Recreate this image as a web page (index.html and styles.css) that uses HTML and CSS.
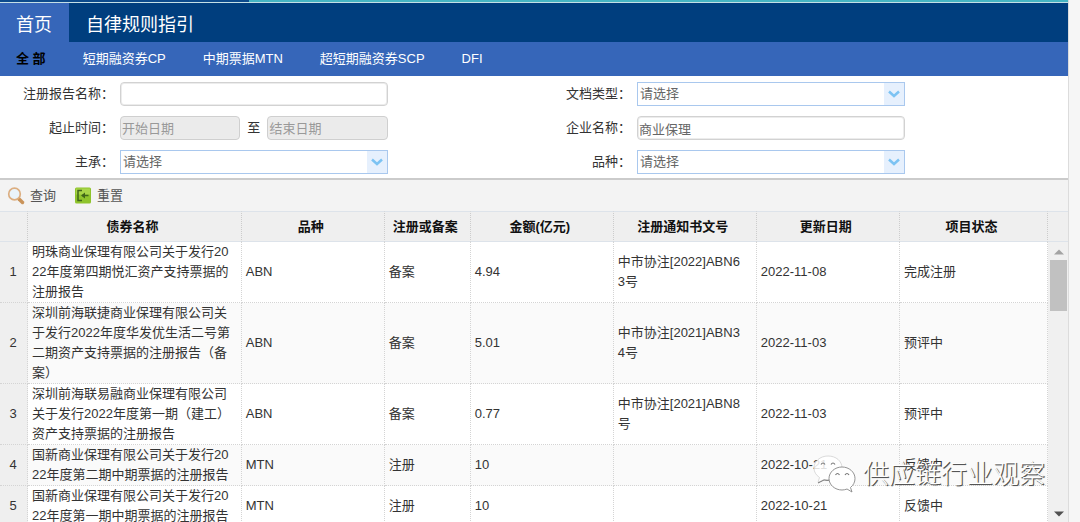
FILE: index.html
```html
<!DOCTYPE html>
<html lang="zh-CN">
<head>
    <meta charset="UTF-8"/>
    <title>自律规则指引</title>
    <meta name="viewport" content="width=device-width, initial-scale=1"/>
    <link rel="stylesheet" href="styles.css">
</head>
<body>
<div class="page">
    <div class="strip"></div>

    <nav class="main-nav">
        <a href="#" class="active">首页</a>
        <a href="#">自律规则指引</a>
    </nav>
    <nav class="sub-nav">
        <a href="#" class="active">全 部</a>
        <a href="#">短期融资券CP</a>
        <a href="#">中期票据MTN</a>
        <a href="#">超短期融资券SCP</a>
        <a href="#">DFI</a>
    </nav>

    <form class="search">
        <div class="search-col">
            <div class="row">
                <label for="name">注册报告名称：</label>
                <div class="field"><input type="text" id="name"/></div>
            </div>
            <div class="row">
                <label for="start">起止时间：</label>
                <div class="field dates">
                    <input type="text" id="start" placeholder="开始日期" disabled/>
                    <label for="end">至</label>
                    <input type="text" id="end" placeholder="结束日期" disabled/>
                </div>
            </div>
            <div class="row">
                <label for="lead">主承：</label>
                <div class="field combo">
                    <select id="lead"><option>请选择</option></select>
                    <svg viewBox="0 0 20 22"><path d="M5 8.500l5 4.500l5-4.500"/></svg>
                </div>
            </div>
        </div>
        <div class="search-col">
            <div class="row">
                <label for="doctype">文档类型：</label>
                <div class="field combo">
                    <select id="doctype"><option>请选择</option></select>
                    <svg viewBox="0 0 20 22"><path d="M5 8.500l5 4.500l5-4.500"/></svg>
                </div>
            </div>
            <div class="row">
                <label for="company">企业名称：</label>
                <div class="field"><input type="text" id="company" value="商业保理"/></div>
            </div>
            <div class="row">
                <label for="kind">品种：</label>
                <div class="field combo">
                    <select id="kind"><option>请选择</option></select>
                    <svg viewBox="0 0 20 22"><path d="M5 8.500l5 4.500l5-4.500"/></svg>
                </div>
            </div>
        </div>
    </form>

    <div class="toolbar">
        <button type="button">
            <svg viewBox="0 0 18 18">
                <path d="M12 12l3.500 3.500" stroke="#c9935a" stroke-width="3.500" stroke-linecap="round"/>
                <circle cx="7.500" cy="7" r="5.800" fill="#eaf4fb" stroke="#dcae80" stroke-width="1.700"/>
            </svg>
            查询
        </button>
        <button type="button">
            <svg viewBox="0 0 18 18">
                <rect x="1" y="0.500" width="16" height="16" rx="1.500" fill="#8fc42c"/>
                <rect x="2" y="1.500" width="14" height="6" fill="#a8d548"/>
                <path d="M8 3.500H4v10h4M14.500 8.500H8" fill="none" stroke="#40661a" stroke-width="1.500"/>
                <path d="M7 8.500l4-3v6z" fill="#40661a"/>
            </svg>
            重置
        </button>
    </div>

    <div class="grid">
        <table>
            <colgroup>
                <col class="c-num"><col class="c-name"><col class="c-mid"><col class="c-reg">
                <col class="c-mid"><col class="c-mid"><col class="c-mid"><col>
            </colgroup>
            <thead>
            <tr>
                <th></th>
                <th>债券名称</th>
                <th>品种</th>
                <th>注册或备案</th>
                <th>金额(亿元)</th>
                <th>注册通知书文号</th>
                <th>更新日期</th>
                <th>项目状态</th>
            </tr>
            </thead>
            <tbody>
            <tr>
                <td>1</td>
                <td>明珠商业保理有限公司关于发行2022年度第四期悦汇资产支持票据的注册报告</td>
                <td>ABN</td>
                <td>备案</td>
                <td>4.94</td>
                <td>中市协注[2022]ABN63号</td>
                <td>2022-11-08</td>
                <td>完成注册</td>
            </tr>
            <tr>
                <td>2</td>
                <td>深圳前海联捷商业保理有限公司关于发行2022年度华发优生活二号第二期资产支持票据的注册报告（备案）</td>
                <td>ABN</td>
                <td>备案</td>
                <td>5.01</td>
                <td>中市协注[2021]ABN34号</td>
                <td>2022-11-03</td>
                <td>预评中</td>
            </tr>
            <tr>
                <td>3</td>
                <td>深圳前海联易融商业保理有限公司关于发行2022年度第一期（建工）资产支持票据的注册报告</td>
                <td>ABN</td>
                <td>备案</td>
                <td>0.77</td>
                <td>中市协注[2021]ABN8号</td>
                <td>2022-11-03</td>
                <td>预评中</td>
            </tr>
            <tr>
                <td>4</td>
                <td>国新商业保理有限公司关于发行2022年度第二期中期票据的注册报告</td>
                <td>MTN</td>
                <td>注册</td>
                <td>10</td>
                <td></td>
                <td>2022-10-21</td>
                <td>反馈中</td>
            </tr>
            <tr>
                <td>5</td>
                <td>国新商业保理有限公司关于发行2022年度第一期中期票据的注册报告</td>
                <td>MTN</td>
                <td>注册</td>
                <td>10</td>
                <td></td>
                <td>2022-10-21</td>
                <td>反馈中</td>
            </tr>
            </tbody>
        </table>
        <div class="side">
            <div class="side-head"></div>
            <div class="scrollbar">
                <svg viewBox="0 0 10 6"><path d="M0 5.500l5-5l5 5z" fill="#a3a3a3"/></svg>
                <div class="thumb"></div>
                <svg viewBox="0 0 10 6"><path d="M0 .5l5 5l5-5z" fill="#505050"/></svg>
            </div>
        </div>
    </div>
</div>

<div class="watermark">
    <svg viewBox="0 0 44 38">
        <path d="M15 1C7 1 1 6.500 1 13c0 4 2 7 5.500 9.500L5 27.500l6-3c9 2 18-3 18-11.500C29 6 23 1 15 1z" fill="#fff" fill-opacity="0.85" stroke="#ccc" stroke-width="0.700"/>
        <path d="M5 28l6-3q3 .7 6 .2" fill="none" stroke="#777"/>
        <path d="M29 12c-7 0-13 5-13 11.500S22 35 29 35c2 0 3.500-.4 5-1l5 3-1.500-4.500C40.500 30 42 27 42 23.500 42 17 36 12 29 12z" fill="#fff" stroke="#888" stroke-width="0.900"/>
        <path d="M8 9.500q2-3 4 0M18 9.500q2-3 4 0M22.500 20q2-3 4 0M32 20q2-3 4 0" fill="none" stroke="#777" stroke-width="1.200"/>
    </svg>
    <span>供应链行业观察</span>
</div>
</body>
</html>
```
FILE: styles.css
```css
* {
    box-sizing: border-box;
}

body {
    margin: 0;
    background: #f6f6f6;
    color: #333;
    font-family: "Liberation Sans", "Noto Sans CJK SC", sans-serif;
    font-size: 13px;
    line-height: 20px;
}

a {
    color: #fff;
    text-decoration: none;
}

.page {
    display: flex;
    flex-direction: column;
    height: 100vh;
    margin-right: 11px;
    overflow: hidden;
    background: #fff;
    border-right: 1px solid #dcdcdc;
}

.strip {
    flex: none;
    height: 3px;
    background: linear-gradient(to right, #0c4a8c 23.3%, #46b5c3 23.3%);
    border-bottom: 1px solid #c4dfe6;
}

/* Navigation */
.main-nav {
    display: flex;
    flex: none;
    height: 39px;
    background: #003e7e;
    font-size: 18px;
}

.main-nav a {
    display: flex;
    align-items: center;
    padding: 4px 17px 0;
}

.main-nav .active {
    background: #3666b9;
    padding-left: 16px;
}

.sub-nav {
    display: flex;
    flex: none;
    align-items: center;
    gap: 37px;
    height: 34px;
    padding-left: 16px;
    background: #3666b9;
}

.sub-nav .active {
    color: #000;
    font-weight: 700;
}

/* Search form */
.search {
    display: flex;
    flex: none;
    padding: 6px 0 4px;
    border-bottom: 2px solid #cbcbcb;
}

.search-col {
    display: flex;
    flex-direction: column;
    gap: 10px;
    width: 48.4%;
}

.row {
    display: flex;
    align-items: center;
    gap: 5px;
    height: 24px;
}

.row > label {
    flex: none;
    width: 115px;
    padding-right: 1px;
    text-align: right;
}

.field {
    width: 51.8%;
}

input,
select {
    width: 100%;
    min-width: 0;
    height: 24px;
    padding: 0 1px;
    color: #666;
    background: #fff;
    border: 1px solid #d2d2d2;
    border-radius: 4px;
    box-shadow: inset 0 0 0 1px #ececec;
    font: inherit;
}

input:disabled {
    background: #ebebeb;
    border-color: #cfcfcf;
}

input::placeholder {
    color: #999;
}

.dates {
    display: flex;
    align-items: center;
    gap: 7px;
}

.combo {
    display: grid;
    grid-template-columns: 1fr 21px;
}

.combo select {
    grid-area: 1 / 1 / 2 / 3;
    appearance: none;
    padding: 0 2px;
    border-color: #a9c8ee;
    border-radius: 0;
    box-shadow: none;
}

.combo svg {
    grid-area: 1 / 2;
    width: 20px;
    height: 22px;
    margin-top: 1px;
    background: #e6f0fd;
    fill: none;
    stroke: #7cc3f3;
    stroke-width: 2.5;
    pointer-events: none;
}

/* Toolbar */
.toolbar {
    display: flex;
    flex: none;
    align-items: center;
    gap: 18px;
    height: 31px;
    padding-left: 7px;
    background: #f3f3f3;
}

.toolbar button {
    display: flex;
    align-items: center;
    gap: 5px;
    padding: 0;
    color: #555;
    background: none;
    border: 0;
    font: inherit;
    cursor: pointer;
}

.toolbar svg {
    width: 18px;
    height: 18px;
}

/* Data grid */
.grid {
    display: flex;
    flex: 1;
    min-height: 0;
}

table {
    flex: 1;
    align-self: flex-start;
    table-layout: fixed;
    width: 100%;
    border-collapse: separate;
    border-spacing: 0;
}

.c-num {
    width: 28px;
}

.c-name {
    width: 20.4%;
}

.c-mid {
    width: 13.65%;
}

.c-reg {
    width: 8.2%;
}

th,
.side-head {
    height: 31px;
    padding: 0 4px 0 0;
    background: #efefef;
    border-top: 1px solid #dde3ea;
    border-bottom: 1px solid #dde3ea;
}

th {
    color: #111;
    border-right: 1px dotted #ccc;
}

td {
    padding: 0 10px 0 4px;
    border-right: 1px dotted #d4d4d4;
    border-bottom: 1px dotted #d4d4d4;
    word-break: break-all;
}

td:first-child {
    padding: 0 1px 0 0;
    background: #efefef;
    text-align: center;
}

tbody tr:nth-child(even) {
    background: #fafafa;
}

.side {
    display: flex;
    flex: none;
    flex-direction: column;
    width: 20px;
}

.side-head {
    flex: none;
}

.scrollbar {
    display: flex;
    flex: 1;
    flex-direction: column;
    align-items: center;
    padding: 7px 1px 5px 2px;
    background: #f0f0f0;
}

.scrollbar svg {
    width: 10px;
    height: 6px;
}

.thumb {
    width: 100%;
    height: 51px;
    margin: 5px 0 auto;
    background: #c1c1c1;
}

/* Watermark over the grid */
.watermark {
    position: absolute;
    right: 35px;
    bottom: 29px;
    display: flex;
    align-items: center;
    gap: 6px;
    color: #fff;
    font-size: 26px;
    font-weight: 300;
    line-height: 38px;
    text-shadow: 1px 1px 0 #555, 1px 1px 1px #777;
    pointer-events: none;
}

.watermark svg {
    width: 44px;
    height: 38px;
}
```
